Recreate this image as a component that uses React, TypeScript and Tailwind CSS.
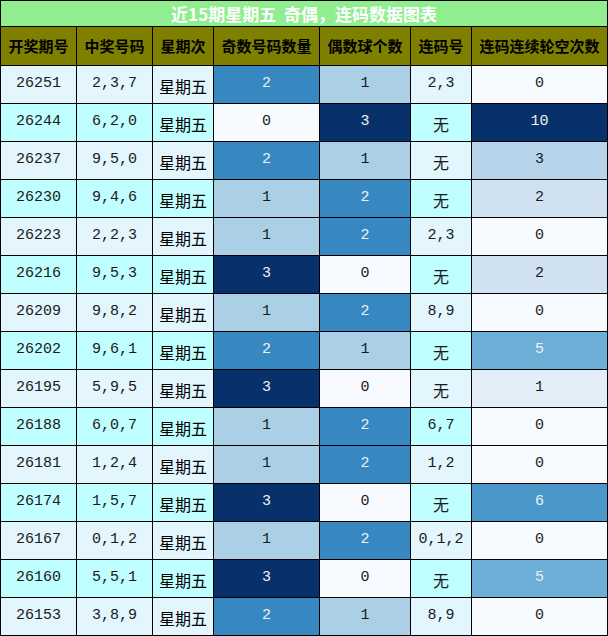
import React from "react";

const rows: [string, string, number, number, string, number][] = [
  ["26251", "2,3,7", 2, 1, "2,3", 0],
  ["26244", "6,2,0", 0, 3, "无", 10],
  ["26237", "9,5,0", 2, 1, "无", 3],
  ["26230", "9,4,6", 1, 2, "无", 2],
  ["26223", "2,2,3", 1, 2, "2,3", 0],
  ["26216", "9,5,3", 3, 0, "无", 2],
  ["26209", "9,8,2", 1, 2, "8,9", 0],
  ["26202", "9,6,1", 2, 1, "无", 5],
  ["26195", "5,9,5", 3, 0, "无", 1],
  ["26188", "6,0,7", 1, 2, "6,7", 0],
  ["26181", "1,2,4", 1, 2, "1,2", 0],
  ["26174", "1,5,7", 3, 0, "无", 6],
  ["26167", "0,1,2", 1, 2, "0,1,2", 0],
  ["26160", "5,5,1", 3, 0, "无", 5],
  ["26153", "3,8,9", 2, 1, "8,9", 0],
];

// 奇偶数量的配色
const countColor: Record<number, string> = {
  0: "bg-[#f7fbff] text-[#1a1a1a]",
  1: "bg-[#abd0e6] text-[#1a1a1a]",
  2: "bg-[#3787c0] text-[#f0f0f0]",
  3: "bg-[#08306b] text-[#f0f0f0]",
};

// 轮空次数的配色
const missColor: Record<number, string> = {
  0: "bg-[#f7fbff] text-[#1a1a1a]",
  1: "bg-[#e3eef9] text-[#1a1a1a]",
  2: "bg-[#d0e1f2] text-[#1a1a1a]",
  3: "bg-[#b7d4ea] text-[#1a1a1a]",
  5: "bg-[#6baed6] text-[#f0f0f0]",
  6: "bg-[#4a98c9] text-[#f0f0f0]",
  10: "bg-[#08306b] text-[#f0f0f0]",
};

const widths = [
  "w-[76px]",
  "w-[76px]",
  "w-[61px]",
  "w-[106px]",
  "w-[91px]",
  "w-[61px]",
  "w-[136px]",
];

const headers = [
  "开奖期号",
  "中奖号码",
  "星期次",
  "奇数号码数量",
  "偶数球个数",
  "连码号",
  "连码连续轮空次数",
];

const cell =
  "flex items-center justify-center border-r border-black shrink-0";

export default function App() {
  return (
    <div
      className="w-[608px] border-t border-l border-black bg-white"
      style={{ fontFamily: '"Liberation Mono", "Noto Sans CJK SC", monospace' }}
    >
      <div
        className="h-[26px] flex items-center justify-center bg-[#90ee90] border-b border-r border-black text-white font-bold text-[17px]"
        style={{ fontFamily: '"Noto Sans CJK SC", sans-serif' }}
      >
        近15期星期五&nbsp;&nbsp;奇偶，连码数据图表
      </div>
      <div
        className="h-[39px] flex bg-[#808000] border-b border-black font-bold text-[15px] text-black"
        style={{ fontFamily: '"Noto Sans CJK SC", sans-serif' }}
      >
        {headers.map((h, i) => (
          <div key={h} className={`${cell} ${widths[i]}`}>
            {h}
          </div>
        ))}
      </div>
      {rows.map((r, idx) => {
        const rowBg = idx % 2 === 0 ? "bg-[#e3f6fe]" : "bg-[#c0ffff]";
        return (
          <div
            key={r[0]}
            className={`h-[38px] flex border-b border-black text-[15px] text-[#1a1a1a] ${rowBg}`}
          >
            <div className={`${cell} ${widths[0]}`}>{r[0]}</div>
            <div className={`${cell} ${widths[1]}`}>{r[1]}</div>
            <div
              className={`${cell} ${widths[2]} pt-[3px] text-[16px] text-black`}
              style={{ fontFamily: '"Noto Sans CJK SC", sans-serif' }}
            >
              星期五
            </div>
            <div className={`${cell} ${widths[3]} ${countColor[r[2]]}`}>{r[2]}</div>
            <div className={`${cell} ${widths[4]} ${countColor[r[3]]}`}>{r[3]}</div>
            <div className={`${cell} ${widths[5]}`}>
              {r[4] === "无" ? (
                <span
                  className="pt-[3px] text-[16px]"
                  style={{ fontFamily: '"Noto Sans CJK SC", sans-serif' }}
                >
                  无
                </span>
              ) : (
                r[4]
              )}
            </div>
            <div className={`${cell} ${widths[6]} ${missColor[r[5]]}`}>{r[5]}</div>
          </div>
        );
      })}
    </div>
  );
}
